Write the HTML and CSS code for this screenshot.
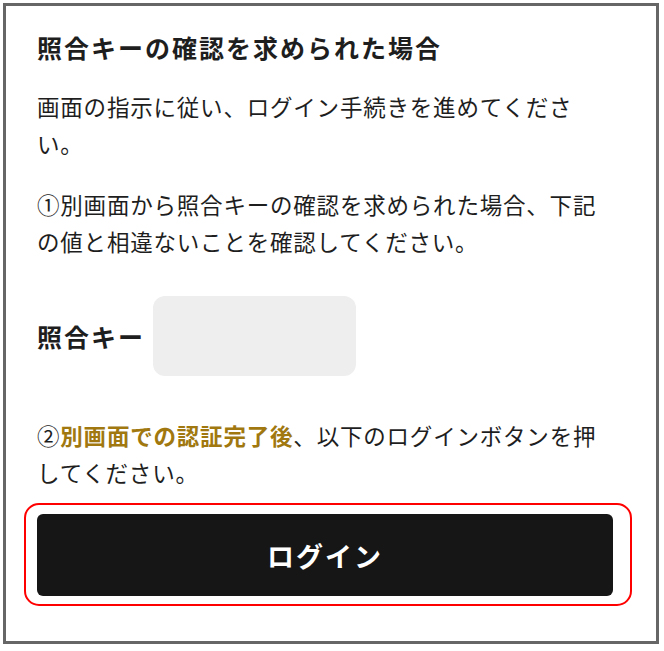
FILE: index.html
```html
<!DOCTYPE html>
<html lang="ja">
<head>
<meta charset="utf-8">
<title>照合キー</title>
<link rel="stylesheet" href="styles.css">
</head>
<body>
<div class="frame">
  <h2 class="title">照合キーの確認を求められた場合</h2>
  <p class="text p1">画面の指示に従い、ログイン手続きを進めてください。</p>
  <p class="text p2">①別画面から照合キーの確認を求められた場合、下記の値と相違ないことを確認してください。</p>
  <div class="keyrow">
    <span class="keylabel">照合キー</span>
    <div class="keybox"></div>
  </div>
  <p class="text p3">②<b class="gold">別画面での認証完了後</b>、以下のログインボタンを押してください。</p>
  <div class="btnwrap">
    <button class="login">ログイン</button>
    <div class="focus"></div>
  </div>
</div>
</body>
</html>
```
FILE: styles.css
```css
html, body {
  margin: 0;
  padding: 0;
  background: #fff;
}
body {
  font-family: "Noto Sans CJK JP", "Noto Sans", sans-serif;
  color: #1e1e1e;
}
.frame {
  box-sizing: border-box;
  margin: 3px;
  width: 656px;
  height: 641px;
  border: 3px solid #666;
  padding: 24px 43px 0 31px;
}
.title {
  margin: 0;
  font-size: 25px;
  line-height: 34px;
  font-weight: 700;
  letter-spacing: 2px;
}
.text {
  margin: 0;
  font-size: 22.5px;
  line-height: 37px;
  letter-spacing: 0.8px;
}
.p1 { margin-top: 24px; }
.p2 { margin-top: 24px; }
.keyrow {
  margin-top: 36px;
  display: flex;
  align-items: center;
  gap: 8px;
}
.keylabel {
  font-size: 25px;
  font-weight: 700;
  letter-spacing: 2px;
  line-height: 34px;
}
.keybox {
  width: 203px;
  height: 80px;
  background: #eeeeee;
  border-radius: 12px;
}
.p3 { margin-top: 41px; }
.gold {
  color: #a0780f;
  font-weight: 700;
}
.btnwrap {
  position: relative;
  margin-top: 23px;
}
.login {
  display: block;
  width: 576px;
  height: 82px;
  border: none;
  border-radius: 6px;
  background: #161616;
  color: #fff;
  font-family: "Noto Sans CJK JP", "Noto Sans", sans-serif;
  font-size: 27px;
  font-weight: 700;
  letter-spacing: 2px;
  padding: 0;
}
.focus {
  position: absolute;
  left: -13px;
  top: -11px;
  right: -19px;
  bottom: -10px;
  border: 2px solid #ff0000;
  border-radius: 15px;
  pointer-events: none;
}
```
